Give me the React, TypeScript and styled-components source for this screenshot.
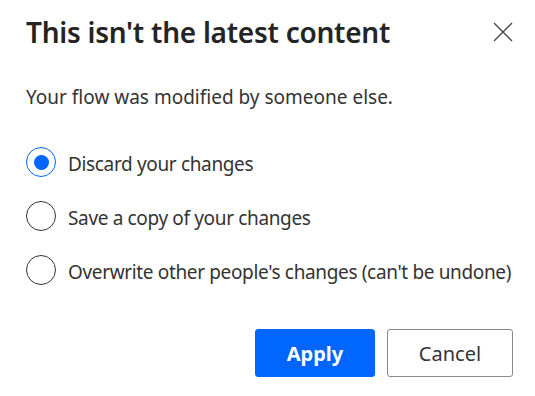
import React, { useState } from "react";
import styled, { createGlobalStyle } from "styled-components";

const Global = createGlobalStyle`
  html, body { margin: 0; padding: 0; background: #fff; }
  body { font-family: "Segoe UI", "Noto Sans", "Open Sans", sans-serif; }
`;

const Dialog = styled.div`
  width: 535px;
  height: 396px;
  box-sizing: border-box;
  padding: 12px 22px 0 26px;
  display: flex;
  flex-direction: column;
  background: #fff;
`;

const Header = styled.div`
  display: flex;
  align-items: center;
  justify-content: space-between;
  height: 40px;
`;

const Title = styled.h1`
  margin: 0;
  font-size: 28px;
  font-weight: 600;
  color: #242424;
  letter-spacing: -0.25px;
  white-space: nowrap;
`;

const CloseButton = styled.button`
  border: none;
  background: transparent;
  padding: 0;
  width: 20px;
  height: 20px;
  display: flex;
  align-items: center;
  justify-content: center;
  cursor: pointer;
`;

const Message = styled.p`
  margin: 32px 0 0;
  font-size: 19px;
  line-height: 26px;
  font-weight: 400;
  color: #333;
  white-space: nowrap;
`;

const Options = styled.div`
  display: flex;
  flex-direction: column;
  gap: 24px;
  margin-top: 37px;
`;

const Option = styled.label`
  display: flex;
  align-items: center;
  gap: 12px;
  height: 30px;
  font-size: 19px;
  letter-spacing: -0.35px;
  color: #333;
  white-space: nowrap;
  cursor: pointer;
`;

const Label = styled.span`
  position: relative;
  top: 2px;
`;

const Circle = styled.span<{ $checked: boolean }>`
  width: 30px;
  height: 30px;
  box-sizing: border-box;
  border-radius: 50%;
  border: 1px solid ${(p) => (p.$checked ? "#0066ff" : "#333")};
  display: flex;
  align-items: center;
  justify-content: center;
  flex-shrink: 0;
  &::after {
    content: "";
    width: 15px;
    height: 15px;
    border-radius: 50%;
    background: #0066ff;
    display: ${(p) => (p.$checked ? "block" : "none")};
  }
`;

const Footer = styled.div`
  display: flex;
  justify-content: flex-end;
  gap: 12px;
  margin-top: auto;
  margin-bottom: 19px;
`;

const Button = styled.button<{ $primary?: boolean }>`
  height: 48px;
  width: ${(p) => (p.$primary ? "120px" : "126px")};
  border-radius: 3px;
  font-family: inherit;
  font-size: 20px;
  font-weight: ${(p) => (p.$primary ? 700 : 400)};
  color: ${(p) => (p.$primary ? "#fff" : "#333")};
  background: ${(p) => (p.$primary ? "#0066ff" : "#fff")};
  border: 1px solid ${(p) => (p.$primary ? "#0066ff" : "#8a8a8a")};
  cursor: pointer;
`;

const options = [
  "Discard your changes",
  "Save a copy of your changes",
  "Overwrite other people's changes (can't be undone)",
];

export default function App() {
  const [sel, setSel] = useState(0);
  return (
    <>
      <Global />
      <Dialog>
        <Header>
          <Title>This isn't the latest content</Title>
          <CloseButton aria-label="Close">
            <svg width="20" height="20" viewBox="0 0 20 20">
              <path d="M1 1 L19 19 M19 1 L1 19" stroke="#444" strokeWidth="1.3" fill="none" />
            </svg>
          </CloseButton>
        </Header>
        <Message>Your flow was modified by someone else.</Message>
        <Options>
          {options.map((o, i) => (
            <Option key={o} onClick={() => setSel(i)}>
              <Circle $checked={sel === i} />
              <Label>{o}</Label>
            </Option>
          ))}
        </Options>
        <Footer>
          <Button $primary>Apply</Button>
          <Button>Cancel</Button>
        </Footer>
      </Dialog>
    </>
  );
}
